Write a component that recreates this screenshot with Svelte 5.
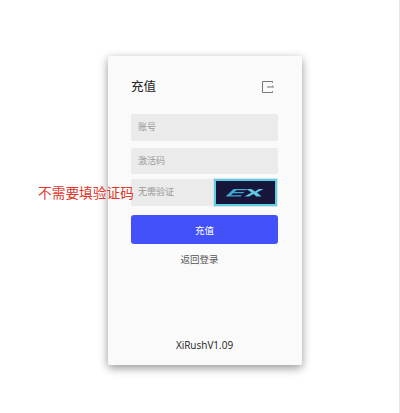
<script>
	const title = '充值';
	const version = 'XiRushV1.09';
</script>

<div class="page">
	<div class="card">
		<header class="card__head">
			<span class="card__title">{title}</span>
			<svg class="card__exit" viewBox="0 0 12 12" aria-hidden="true">
				<path d="M10.5 1.8V0.5H0.5V11.5H10.5V10.2" />
				<path d="M5 6H11.5M10 4.8L11.5 6" />
			</svg>
		</header>

		<div class="field"><span class="field__text">账号</span></div>
		<div class="field field--code"><span class="field__text">激活码</span></div>
		<div class="field field--captcha">
			<span class="field__text">无需验证</span>
			<div class="captcha">
				<svg viewBox="0 0 56 23" aria-hidden="true">
					<path class="captcha__e" d="M8 15.5L16 8H30L28.5 9.3H19L17 11H27L25.5 12.3H15.5L13.6 14.2H24.5L23 15.5Z" />
					<path class="captcha__x" d="M29 8H34L37.5 10.4L41.5 8H46L39.5 11.6L44 15.5H39L36 13L31.5 15.5H27L34 11.5Z" />
				</svg>
			</div>
			<span class="note">不需要填验证码</span>
		</div>

		<button type="button" class="submit">{title}</button>
		<div class="back">返回登录</div>
		<div class="version">{version}</div>
	</div>
</div>

<style>
	:global(body) {
		margin: 0;
		background: #fff;
	}

	.page {
		box-sizing: border-box;
		width: 400px;
		height: 413px;
		padding: 56px 0 0 108px;
		border-right: 1px solid #e6e6e6;
		overflow: hidden;
		font-family: "Noto Sans CJK SC", "Liberation Sans", sans-serif;
	}

	.card {
		box-sizing: border-box;
		width: 194px;
		height: 309px;
		padding: 20px 24px 0 23px;
		background: #fafafa;
		border-radius: 2px;
		box-shadow: 0 3px 10px rgba(0, 0, 0, 0.42);
		display: flex;
		flex-direction: column;
	}

	.card__head {
		display: flex;
		align-items: center;
		justify-content: space-between;
		height: 22px;
		margin-bottom: 16px;
		padding-right: 4px;
	}

	.card__title {
		margin-bottom: 4px;
		font-size: 12.5px;
		color: #222;
	}

	.card__exit {
		width: 12px;
		height: 12px;
		fill: none;
		stroke: #777;
		stroke-width: 1;
	}

	.field {
		height: 27px;
		line-height: 26px;
		margin-bottom: 7px;
		padding-left: 7px;
		background: #ebebeb;
		border-radius: 2px;
		font-size: 9px;
		color: #999;
	}

	.field--code {
		height: 26px;
		margin-bottom: 5px;
	}

	.field--captcha {
		position: relative;
		display: flex;
		justify-content: space-between;
		margin-bottom: 9px;
	}

	.captcha {
		box-sizing: border-box;
		width: 63px;
		height: 27px;
		margin-right: 1px;
		border: 2px solid #5ad0e6;
		outline: 1px solid #e2e2e2;
	}

	.captcha svg {
		display: block;
		width: 100%;
		height: 100%;
		background: #17153a;
	}

	.captcha__e {
		fill: #3fa9cf;
	}

	.captcha__x {
		fill: #5fc8e2;
	}

	/* annotation drawn over the screenshot */
	.note {
		position: absolute;
		left: -93px;
		top: 0;
		font-size: 13.7px;
		line-height: 27px;
		color: #e0352b;
		white-space: nowrap;
	}

	.submit {
		height: 29px;
		border: none;
		border-radius: 3px;
		background: #4351fb;
		color: #fff;
		font: inherit;
		font-size: 9.5px;
		padding: 0;
	}

	.back {
		margin-top: 8px;
		padding-right: 10px;
		text-align: center;
		font-size: 9.5px;
		line-height: 15px;
		color: #555;
	}

	.version {
		margin-top: auto;
		margin-bottom: 13px;
		text-align: center;
		font-family: "Open Sans", "Liberation Sans", sans-serif;
		font-size: 10px;
		line-height: 14px;
		color: #222;
	}
</style>
